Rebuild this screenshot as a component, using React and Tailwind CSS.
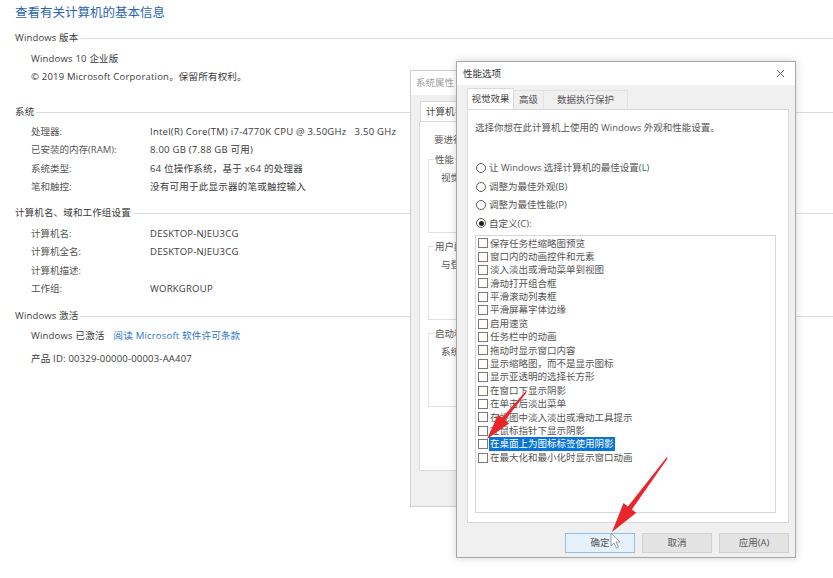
import React from "react";

const FONT = "font-['Open_Sans','Noto_Sans_CJK_SC',sans-serif]";

function Header({ children, mt }) {
  return (
    <div className={`flex items-center h-[14px] ${mt}`}>
      <span className="text-[9.5px] text-[#3a3a3a] whitespace-nowrap leading-none tracking-[0.15px]">{children}</span>
      <div className="flex-1 ml-[2px] border-t border-[#dcdcdc]" />
    </div>
  );
}

function Row({ label, value, h = "h-[18.5px]" }) {
  return (
    <div className={`flex items-center ${h} pl-[16px] text-[9.5px] leading-none`}>
      <span className="w-[119px] text-[#555] whitespace-nowrap">{label}</span>
      <span className="text-[#3a3a3a] whitespace-pre tracking-[0.25px]">{value}</span>
    </div>
  );
}

function Radio({ checked, children }) {
  return (
    <div className="flex items-center h-[18.4px]">
      <span className="ml-[1px] w-[10px] h-[10px] rounded-full border border-[#5a5a5a] bg-white flex items-center justify-center">
        {checked && <span className="w-[5px] h-[5px] rounded-full bg-[#222]" />}
      </span>
      <span className="ml-[3px] text-[9.5px] text-[#555] leading-none whitespace-nowrap">{children}</span>
    </div>
  );
}

const items = [
  "保存任务栏缩略图预览",
  "窗口内的动画控件和元素",
  "淡入淡出或滑动菜单到视图",
  "滑动打开组合框",
  "平滑滚动列表框",
  "平滑屏幕字体边缘",
  "启用速览",
  "任务栏中的动画",
  "拖动时显示窗口内容",
  "显示缩略图，而不是显示图标",
  "显示亚透明的选择长方形",
  "在窗口下显示阴影",
  "在单击后淡出菜单",
  "在视图中淡入淡出或滑动工具提示",
  "在鼠标指针下显示阴影",
  "在桌面上为图标标签使用阴影",
  "在最大化和最小化时显示窗口动画",
];

function Check({ children, selected }) {
  return (
    <div className="flex items-center h-[13.4px] pl-[2px]">
      <span className="w-[10px] h-[10px] border border-[#7a7a7a] bg-white shrink-0" />
      <span
        className={`ml-[1px] px-[1px] h-[14px] flex items-center text-[9.5px] leading-none whitespace-nowrap ${
          selected ? "bg-[#0a74d6] text-white" : "text-[#555]"
        }`}
      >
        {children}
      </span>
    </div>
  );
}

function Btn({ children, primary }) {
  return (
    <div
      className={`w-[70px] h-[20px] flex items-center justify-center text-[9.5px] text-[#555] leading-none border ${
        primary ? "bg-[#e5f1fb] border-[#8fc0ec]" : "bg-[#e3e3e3] border-[#d2d2d2]"
      }`}
    >
      {children}
    </div>
  );
}

function SysWindow() {
  return (
    <div className="absolute left-[410px] top-[70px] w-[300px] h-[437px] border border-[#d0d0d0] bg-[#f0f0f0] flex flex-col">
      <div className="h-[24px] bg-white flex items-center pl-[5px] text-[9.5px] text-[#a0a0a0] leading-none">系统属性</div>
      <div className="pt-[6px] pl-[8px] flex">
        <div className="h-[20px] ml-[1px] px-[5px] bg-white border border-b-0 border-[#d9d9d9] flex items-center text-[9.5px] text-[#444] leading-none">
          计算机名
        </div>
      </div>
      <div className="ml-[8px] h-[350px] bg-white border border-[#d9d9d9] flex flex-col pl-[14px] text-[9.5px] text-[#555] leading-none">
        <div className="mt-[13px] h-[12px] whitespace-nowrap">要进行大部分更改，你必须作为管理员登录。</div>
        <fieldset className="mt-[8px] -ml-[6px] mr-[10px] h-[78px] border border-[#e2e2e2] pl-[12px]">
          <legend className="px-[1px] -ml-[7px] whitespace-nowrap">性能</legend>
          <div className="mt-[8px] whitespace-nowrap">视觉效果，处理器计划，内存使用，以及虚拟内存</div>
        </fieldset>
        <fieldset className="mt-[9px] -ml-[6px] mr-[10px] h-[78px] border border-[#e2e2e2] pl-[12px]">
          <legend className="px-[1px] -ml-[7px] whitespace-nowrap">用户配置文件</legend>
          <div className="mt-[8px] whitespace-nowrap">与登录账户相关的桌面设置</div>
        </fieldset>
        <fieldset className="mt-[9px] -ml-[6px] mr-[10px] h-[78px] border border-[#e2e2e2] pl-[12px]">
          <legend className="px-[1px] -ml-[7px] whitespace-nowrap">启动和故障恢复</legend>
          <div className="mt-[8px] whitespace-nowrap">系统启动、系统故障和调试信息</div>
        </fieldset>
      </div>
    </div>
  );
}

function PerfDialog() {
  return (
    <div className="absolute left-[456px] top-[61px] w-[340px] h-[497px] border border-[#a8a8a8] bg-[#f0f0f0] shadow-[0_0_8px_rgba(0,0,0,0.18)] flex flex-col">
      <div className="h-[23px] bg-white flex items-center justify-between pl-[6px] pr-[10px]">
        <span className="text-[9.5px] text-[#333] leading-none">性能选项</span>
        <svg width="9" height="9" viewBox="0 0 9 9" className="mb-[1px]">
          <path d="M1 1 L8 8 M8 1 L1 8" stroke="#555" strokeWidth="1" fill="none" />
        </svg>
      </div>
      <div className="flex-1 flex flex-col pl-[10px] pr-[6px]">
        <div className="pt-[4px] flex items-end h-[24px]">
          <div className="h-[21px] w-[47px] bg-white border border-b-0 border-[#d9d9d9] flex items-center justify-center text-[9.5px] text-[#444] leading-none">
            视觉效果
          </div>
          <div className="h-[19px] px-[5px] border border-l-0 border-b-0 border-[#e2e2e2] flex items-center text-[9.5px] text-[#555] leading-none">
            高级
          </div>
          <div className="h-[19px] px-[13px] border border-l-0 border-b-0 border-[#e2e2e2] flex items-center text-[9.5px] text-[#555] leading-none">
            数据执行保护
          </div>
        </div>
        <div className="h-[414px] bg-white border border-[#d9d9d9] flex flex-col pl-[7px]">
          <div className="mt-[11px] h-[14px] flex items-center text-[9.5px] text-[#555] leading-none whitespace-nowrap">
            选择你想在此计算机上使用的 Windows 外观和性能设置。
          </div>
          <div className="mt-[24px] flex flex-col">
            <Radio>让 Windows 选择计算机的最佳设置(L)</Radio>
            <Radio>调整为最佳外观(B)</Radio>
            <Radio>调整为最佳性能(P)</Radio>
            <Radio checked>自定义(C):</Radio>
          </div>
          <div className="mt-[2px] w-[301px] h-[278px] border border-[#d6d6d6] flex flex-col pt-[1px]">
            {items.map((t, i) => (
              <Check key={t} selected={i === 15}>
                {t}
              </Check>
            ))}
          </div>
        </div>
        <div className="mt-[10px] flex justify-end gap-[7px]">
          <Btn primary>确定</Btn>
          <Btn>取消</Btn>
          <Btn>应用(A)</Btn>
        </div>
      </div>
    </div>
  );
}

function Overlay() {
  return (
    <svg className="absolute left-0 top-0 pointer-events-none" width="833" height="578" viewBox="0 0 833 578">
      <polygon
        points="526.5,392.4 505.1,420.3 509.0,423.5 487,439 498.2,414.5 502.1,417.7 525.5,391.6"
        fill="#e8262b"
      />
      <polygon
        points="667.5,458.4 631.9,509.4 636.3,512.7 612,532 623.5,503.1 627.9,506.4 666.5,457.6"
        fill="#e8262b"
      />
      <path
        d="M611 533 L611 546 L614 543 L616.5 548 L618.5 547 L616 542 L620 542 Z"
        fill="#fff"
        stroke="#8a8a8a"
        strokeWidth="0.8"
        strokeLinejoin="round"
      />
    </svg>
  );
}

export default function App() {
  return (
    <div className={`relative w-[833px] h-[578px] overflow-hidden bg-white ${FONT}`}>
      <div className="pl-[15px] flex flex-col">
        <div className="mt-[4px] h-[18px] flex items-center text-[12.5px] text-[#2a64b4] leading-none">
          查看有关计算机的基本信息
        </div>
        <Header mt="mt-[9px]">Windows 版本</Header>
        <div className="mt-[5px] flex flex-col pl-[16px] text-[9.5px] text-[#3a3a3a] leading-none tracking-[0.2px]">
          <div className="h-[18px] flex items-center">Windows 10 企业版</div>
          <div className="h-[18px] flex items-center">© 2019 Microsoft Corporation。保留所有权利。</div>
        </div>
        <Header mt="mt-[19px]">系统</Header>
        <div className="mt-[3px] flex flex-col">
          <Row label="处理器:" value="Intel(R) Core(TM) i7-4770K CPU @ 3.50GHz   3.50 GHz" />
          <Row label="已安装的内存(RAM):" value="8.00 GB (7.88 GB 可用)" />
          <Row label="系统类型:" value="64 位操作系统，基于 x64 的处理器" />
          <Row label="笔和触控:" value="没有可用于此显示器的笔或触控输入" />
        </div>
        <Header mt="mt-[10px]">计算机名、域和工作组设置</Header>
        <div className="mt-[4px] flex flex-col">
          <Row label="计算机名:" value="DESKTOP-NJEU3CG" />
          <Row label="计算机全名:" value="DESKTOP-NJEU3CG" />
          <Row label="计算机描述:" value="" />
          <Row label="工作组:" value="WORKGROUP" />
        </div>
        <Header mt="mt-[11px]">Windows 激活</Header>
        <div className="mt-[4px] flex flex-col pl-[16px] text-[9.5px] text-[#3a3a3a] leading-none tracking-[0.2px]">
          <div className="h-[18px] flex items-center whitespace-pre">
            <span>Windows 已激活</span>
            <span className="ml-[9px] text-[#2a73c8]">阅读 Microsoft 软件许可条款</span>
          </div>
          <div className="mt-[5px] h-[18px] flex items-center">产品 ID: 00329-00000-00003-AA407</div>
        </div>
      </div>
      <SysWindow />
      <PerfDialog />
      <Overlay />
    </div>
  );
}
